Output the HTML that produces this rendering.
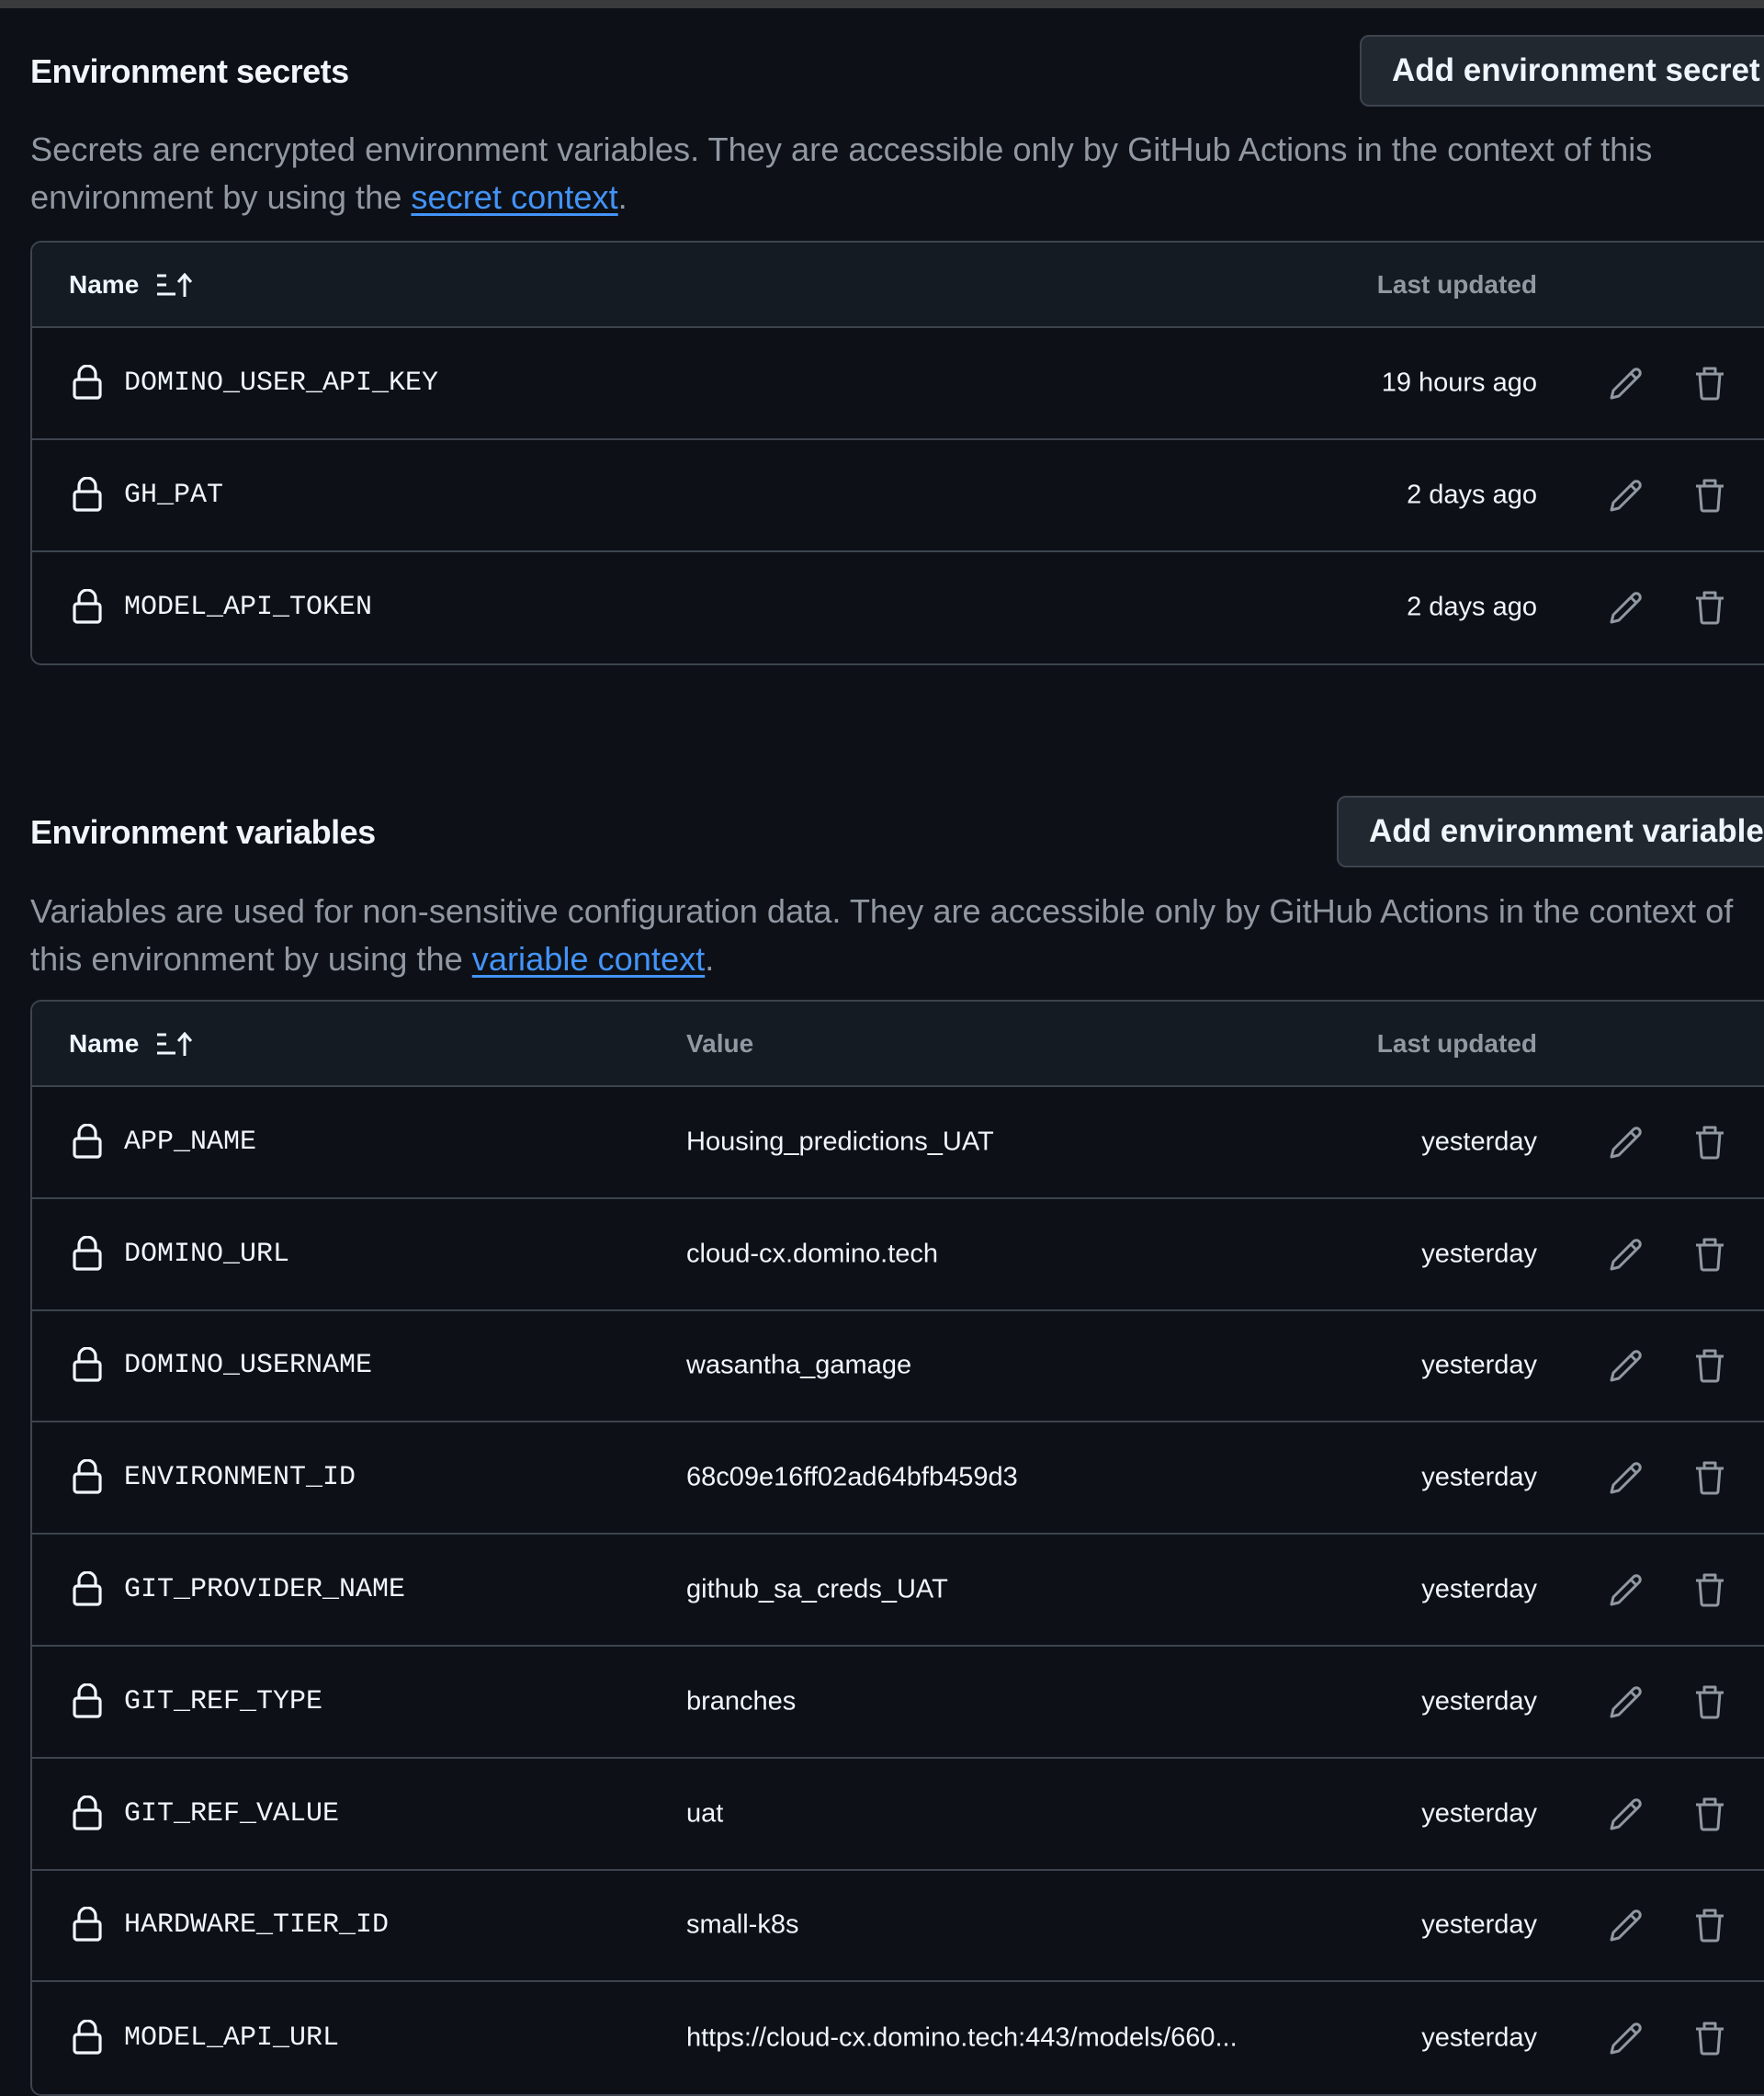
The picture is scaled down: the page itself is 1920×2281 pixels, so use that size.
<!DOCTYPE html>
<html><head><meta charset="utf-8"><style>
*{box-sizing:border-box;margin:0;padding:0}
body{width:1920px;height:2257px;overflow:hidden;background:#0d1117;font-family:"Liberation Sans",sans-serif;color:#f0f6fc;position:relative}
.topbar{position:absolute;left:0;top:0;width:1920px;height:9px;background:#3a3b3d}
.h{position:absolute;left:33px;font-size:36px;font-weight:bold;letter-spacing:-0.5px;line-height:40px}
.btn{position:absolute;height:78px;background:#212830;border:2px solid #3d444d;border-radius:10px;font-size:35px;font-weight:bold;line-height:74px;padding-left:33px;width:600px;color:#f0f6fc}
.desc{position:absolute;left:33px;font-size:36.2px;line-height:52px;color:#9198a1;white-space:nowrap}
.desc a{color:#4493f8;text-decoration:underline;text-underline-offset:5px}
.tbl{position:absolute;left:33px;width:1950px;border:2px solid #3d444d;border-radius:12px;overflow:hidden}
.hd{height:93px;background:#151b23;border-bottom:2px solid #3d444d;position:relative}
.row{height:121.8px;border-bottom:2px solid #3d444d;position:relative}
.row:last-child{border-bottom:none}
.nm{position:absolute;left:40px;top:50%;transform:translateY(-50%);font-size:28px;font-weight:bold;display:flex;align-items:center}
.th{position:absolute;top:50%;transform:translateY(-50%);font-size:28px;font-weight:bold;color:#9198a1}
.lu{position:absolute;right:308px;text-align:right}
.lock{position:absolute;left:44px;top:50%;margin-top:-20px}
.key{position:absolute;left:100px;top:50%;transform:translateY(-50%);font-family:"Liberation Mono",monospace;font-size:30px}
.val{position:absolute;left:712px;top:50%;transform:translateY(-50%);font-size:29px}
.dt{position:absolute;right:308px;top:50%;transform:translateY(-50%);font-size:29px}
.pen{position:absolute;left:1716px;top:50%;margin-top:-18px}
.tr{position:absolute;left:1809px;top:50%;margin-top:-19px}
</style></head><body>
<div class="topbar"></div>

<div class="h" style="top:58px">Environment secrets</div>
<div class="btn" style="left:1480px;top:38px">Add environment secret</div>
<div class="desc" style="top:137px">Secrets are encrypted environment variables. They are accessible only by GitHub Actions in the context of this<br>environment by using the <a>secret context</a>.</div>

<div class="tbl" style="top:262px">
 <div class="hd"><div class="nm">Name<svg style="margin-left:18px" width="42" height="26" viewBox="0 0 42 26"><g stroke="#f0f6fc" stroke-width="3" fill="none"><path d="M2 3h10M2 13h10M2 23h20"/><path d="M32 26V3M25 10l7-8 7 8"/></g></svg></div><div class="th lu">Last updated</div></div>
</div>

<div class="h" style="top:886px">Environment variables</div>
<div class="btn" style="left:1455px;top:866px">Add environment variable</div>
<div class="desc" style="top:966px">Variables are used for non-sensitive configuration data. They are accessible only by GitHub Actions in the context of<br>this environment by using the <a>variable context</a>.</div>

<div class="tbl" style="top:1088px" id="vt">
 <div class="hd"><div class="nm">Name<svg style="margin-left:18px" width="42" height="26" viewBox="0 0 42 26"><g stroke="#f0f6fc" stroke-width="3" fill="none"><path d="M2 3h10M2 13h10M2 23h20"/><path d="M32 26V3M25 10l7-8 7 8"/></g></svg></div><div class="th" style="left:712px">Value</div><div class="th lu">Last updated</div></div>
</div>

<script>
var LOCK='<svg class="lock" width="32" height="38" viewBox="0 0 32 38"><g stroke="#f0f6fc" stroke-width="3.2" fill="none"><path d="M7 16V10a9 9 0 0 1 18 0v6"/><rect x="2" y="16" width="28" height="20" rx="3"/></g></svg>';
var PEN='<svg class="pen" width="38" height="36" viewBox="0 0 38 36"><g stroke="#9198a1" stroke-width="3" fill="none" stroke-linejoin="round"><path d="M3 34l2-8L27 4a4 4 0 0 1 6 6L11 32z"/><path d="M24 7l6 6"/></g></svg>';
var TR='<svg class="tr" width="34" height="38" viewBox="0 0 34 38"><g stroke="#9198a1" stroke-width="3" fill="none" stroke-linejoin="round"><path d="M2 9h30M11 9V3h12v6"/><path d="M6 9l2 25a2 2 0 0 0 2 2h14a2 2 0 0 0 2-2l2-25"/></g></svg>';
function row(k,v,d){return '<div class="row">'+LOCK+'<div class="key">'+k+'</div>'+(v!==null?'<div class="val">'+v+'</div>':'')+'<div class="dt">'+d+'</div>'+PEN+TR+'</div>';}
var st=document.querySelectorAll('.tbl')[0];
st.insertAdjacentHTML('beforeend',row('DOMINO_USER_API_KEY',null,'19 hours ago')+row('GH_PAT',null,'2 days ago')+row('MODEL_API_TOKEN',null,'2 days ago'));
var vs=[['APP_NAME','Housing_predictions_UAT'],['DOMINO_URL','cloud-cx.domino.tech'],['DOMINO_USERNAME','wasantha_gamage'],['ENVIRONMENT_ID','68c09e16ff02ad64bfb459d3'],['GIT_PROVIDER_NAME','github_sa_creds_UAT'],['GIT_REF_TYPE','branches'],['GIT_REF_VALUE','uat'],['HARDWARE_TIER_ID','small-k8s'],['MODEL_API_URL','https://cloud-cx.domino.tech:443/models/660...']];
var h='';vs.forEach(function(x){h+=row(x[0],x[1],'yesterday')});
document.getElementById('vt').insertAdjacentHTML('beforeend',h);
</script>
</body></html>
